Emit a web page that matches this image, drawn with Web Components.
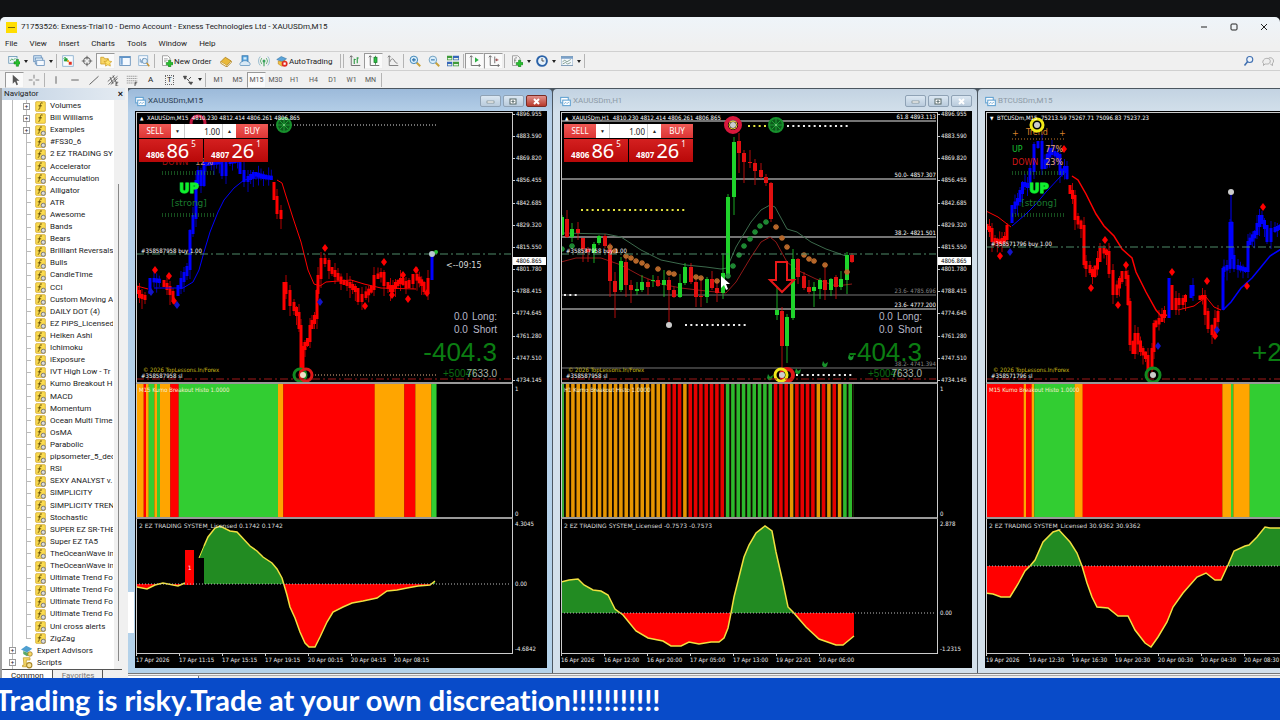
<!DOCTYPE html>
<html lang="en">
<head>
<meta charset="utf-8">
<title>71753526: Exness-Trial10 - Demo Account</title>
<style>
    html, body { margin: 0; padding: 0; background: #111214; }
    body { font-family: Roboto, "Noto Sans", sans-serif; font-size: 8px; color: #222; overflow-x: hidden; }
</style>
</head>
<body>
<terminal-app>
    <title-bar slot="top">71753526: Exness-Trial10 - Demo Account - Exness Technologies Ltd - XAUUSDm,M15</title-bar>
    <menu-bar slot="top" items="File,View,Insert,Charts,Tools,Window,Help"></menu-bar>
    <main-tools slot="top"></main-tools>
    <line-tools slot="top"></line-tools>
    <nav-tree slot="side"></nav-tree>
    <chart-window chart="gold15" active>XAUUSDm,M15</chart-window>
    <chart-window chart="gold60">XAUUSDm,H1</chart-window>
    <chart-window chart="btc15">BTCUSDm,M15</chart-window>
    <news-ticker slot="bottom">Trading is risky.Trade at your own discreation!!!!!!!!!!!</news-ticker>
</terminal-app>

<script>
const RED = '#ff0000', BLUE = '#0000ff', ORANGE = '#ffa500', LIME = '#32cd32', GREEN = '#228b22';

/* ---------- icons, 16 unit grid ---------- */
const ICONS = {
    newChart: '<rect x="1" y="2" width="11" height="9" fill="#eef6fb" stroke="#5b8fae"/><path d="M3 8l2-3 2 2 3-3" fill="none" stroke="#3a9a4a"/><path d="M8 9h3V6h3v3h3v3h-3v3h-3v-3H8z" fill="#25c02c" stroke="#0b7a12" stroke-width=".7"/>',
    profiles: '<rect x="1" y="1" width="10" height="8" fill="#cfe4f5" stroke="#5b87b5"/><rect x="3" y="4" width="10" height="8" fill="#e4f0fa" stroke="#5b87b5"/><rect x="5" y="7" width="10" height="7" fill="#f6faff" stroke="#5b87b5"/>',
    market: '<rect x="1" y="1" width="14" height="14" fill="#f8fcff" stroke="#7aa5c9"/><path d="M4 3v5M4 3l-2 2M4 3l2 2M4 5h3v3H3z" stroke="#26a03a" fill="#26a03a"/><path d="M9 9h4v4H9z" fill="#e03020"/><circle cx="8" cy="8" r="1.5" fill="#e8a020"/>',
    target: '<circle cx="8" cy="8" r="4.5" fill="none" stroke="#666" stroke-width="1.4"/><path d="M8 1v5M8 10v5M1 8h5M10 8h5" stroke="#666" stroke-width="1.3"/>',
    navigator: '<path d="M1 3h4l1 2h5v7H1z" fill="#f7d468" stroke="#c99a1c"/><path d="M10.500 5l1.700 3.200 3.500.5-2.500 2.500.6 3.600-3.300-1.700-3.200 1.700.6-3.600-2.500-2.500 3.500-.5z" fill="#ffe36a" stroke="#c48f10" stroke-width=".8"/>',
    panel: '<rect x="1" y="2" width="14" height="12" fill="#f4f9ff" stroke="#4f7fb0"/><path d="M2 3h3v10H2z" fill="#7aa7d6"/><path d="M1 2h14v2H1z" fill="#5f93c8"/>',
    tester: '<rect x="1" y="1" width="12" height="13" fill="#f4f9ff" stroke="#7da7cc"/><path d="M3 10V5M5 11V7M7 9V4" stroke="#4478a8"/><circle cx="9" cy="8" r="3.500" fill="#dcecf8" stroke="#5a86ad"/><path d="M11.500 10.500L15 15" stroke="#c79434" stroke-width="2"/>',
    order: '<path d="M2 1h7l3 3v10H2z" fill="#fff" stroke="#888"/><path d="M4 5h5M4 7h5M4 9h3" stroke="#999"/><path d="M7 10h3V7h3v3h3v3h-3v3h-3v-3H7z" fill="#25c02c" stroke="#0b7a12" stroke-width=".7"/>',
    book: '<path d="M1 9l6-6 8 5-6 6z" fill="#e9b93a" stroke="#a8770f"/><path d="M1 9v2l8 5v-2M15 8v2l-6 6" fill="#fff3c8" stroke="#a8770f"/>',
    cloud: '<rect x="4" y="1" width="8" height="8" fill="#5aa7e0" stroke="#2f6fa8"/><path d="M6 3h4v3H6z" fill="#d6ecfb"/><path d="M2 14a3 3 0 012-5c2-2 6-2 8 0a3 3 0 012 5z" fill="#d9e9f5" stroke="#5a8fbb"/>',
    signal: '<circle cx="8" cy="8" r="2" fill="#3aa35a"/><path d="M5 4a6 6 0 000 8M11 4a6 6 0 010 8" fill="none" stroke="#5fb070" stroke-width="1.200"/><path d="M3 2a9 9 0 000 12M13 2a9 9 0 010 12" fill="none" stroke="#8fb8cc" stroke-width="1.200"/><path d="M8 9v6" stroke="#3aa35a" stroke-width="1.500"/>',
    auto: '<path d="M1 6l6-4 7 3-6 4z" fill="#5ba4d8" stroke="#2f6da0" stroke-width=".7"/><path d="M3 8v4l5 3 4-3V7l-4 2z" fill="#f2c043" stroke="#b37c12" stroke-width=".7"/><circle cx="11.500" cy="11.500" r="4" fill="#e02c20"/><rect x="10" y="10" width="3" height="3" fill="#fff"/>',
    bars: '<path d="M3 1v13h12M1 3l2-2 2 2" fill="none" stroke="#666" stroke-width="1.200"/><path d="M7 5v7M7 6h2M11 3v8M11 4h2" stroke="#2f9a44" stroke-width="1.500"/>',
    candles: '<path d="M3 1v13h12M1 3l2-2 2 2" fill="none" stroke="#666" stroke-width="1.200"/><path d="M10 1v12" stroke="#1c7a2c"/><rect x="8" y="3" width="4" height="7" fill="#2cc043" stroke="#1c7a2c"/>',
    line: '<path d="M3 1v13h12M1 3l2-2 2 2M4 9c2-5 4-5 6-1 1 2 3 3 4 3" fill="none" stroke="#777" stroke-width="1.200"/>',
    zoomIn: '<path d="M10 10l5 5" stroke="#c9a23a" stroke-width="2.500"/><circle cx="6.500" cy="6.500" r="5" fill="#d9eefb" stroke="#3f86b8" stroke-width="1.300"/><path d="M4 6.500h5M6.500 4v5" stroke="#2a6fa8" stroke-width="1.400"/>',
    zoomOut: '<path d="M10 10l5 5" stroke="#c9a23a" stroke-width="2.500"/><circle cx="6.500" cy="6.500" r="5" fill="#d9eefb" stroke="#6f9fc0" stroke-width="1.300"/><path d="M4 6.500h5" stroke="#2a6fa8" stroke-width="1.400"/>',
    tile: '<rect x="0" y="1" width="7" height="6" fill="#3f9a3a"/><rect x="8" y="1" width="8" height="6" fill="#3566b8"/><rect x="0" y="9" width="7" height="6" fill="#3566b8"/><rect x="8" y="9" width="8" height="6" fill="#3f9a3a"/><path d="M1 4h5v2H1zM9 4h6v2H9zM1 12h5v2H1zM9 12h6v2H9z" fill="#e8f2e0"/>',
    scroll: '<path d="M3 1v13h12M1 3l2-2 2 2M13 12l2 2-2 2" fill="none" stroke="#666" stroke-width="1.200"/><path d="M8 3l5 3.500L8 10z" fill="#2cb043"/>',
    shift: '<path d="M3 1v13h12M1 3l2-2 2 2M13 12l2 2-2 2M9 2v9" fill="none" stroke="#666" stroke-width="1.200"/><path d="M14 6.500h-3M12 5l-2 1.500L12 8z" fill="#a05050" stroke="#a05050"/>',
    indicator: '<path d="M2 1h7l3 3v10H2z" fill="#f6f6f6" stroke="#888"/><path d="M8 4c-2-1-3 0-3 2v5M4 7h3" fill="none" stroke="#777"/><path d="M7 10h3V7h3v3h3v3h-3v3h-3v-3H7z" fill="#25c02c" stroke="#0b7a12" stroke-width=".7"/>',
    clock: '<circle cx="8" cy="8" r="6.500" fill="#e8f3fc" stroke="#2a62a8" stroke-width="2.600"/><path d="M8 4v4h3" fill="none" stroke="#444" stroke-width="1.200"/>',
    template: '<rect x="0" y="2" width="16" height="12" fill="#f3f8fd" stroke="#5f83a6"/><path d="M0 2h16v3H0z" fill="#7ba1c8"/><path d="M2 9l3-2 3 2 5-3M2 12l4-2 3 2 4-2" fill="none" stroke="#6a8a76"/>',
    cursor: '<path d="M5 1v12l3-3 2 5 2-1-2-5h4z" fill="#555"/>',
    cross: '<path d="M8 1v5M8 10v5M1 8h5M10 8h5" stroke="#777" stroke-width="1.200"/>',
    vline: '<path d="M8 3v10" stroke="#555" stroke-width="1.200"/>',
    hline: '<path d="M3 8h10" stroke="#555" stroke-width="1.200"/>',
    trend: '<path d="M2 14L14 3" stroke="#555" stroke-width="1.200"/>',
    channel: '<path d="M1 10l9-8M2 14L14 3M5 14l9-8M4 4l4 9M8 2l4 9" stroke="#555" stroke-width="1.100" fill="none"/><path d="M15 11h-3v5h3M12 13h2" fill="none" stroke="#333"/>',
    fibo: '<path d="M1 3h14M1 6h14M1 9h14M1 12h9" stroke="#888" stroke-dasharray="2 .6"/><path d="M15 11h-3v5M12 13h2" fill="none" stroke="#333"/>',
    arrows: '<path d="M2 3l4 0-2 4zM6 6l4 4M9 11h5l-2 3zM9 7l3-3" fill="#444" stroke="#444" stroke-width="1.200"/>',
    search: '<circle cx="9" cy="6" r="4" fill="#eef4fb" stroke="#3f6fb0" stroke-width="1.500"/><path d="M6 9l-4 5" stroke="#3f6fb0" stroke-width="2"/>',
    chat: '<path d="M1 10c0-7 10-7 10-2s-5 4-7 4l-2 2v-3zM9 4c6-2 8 5 5 7v3l-3-2" fill="#eee" stroke="#999"/>',
    windowIcon: '<rect x="1" y="2" width="11" height="8" fill="#fff" stroke="#5d9fd0" stroke-width="1.500"/><rect x="4" y="6" width="11" height="8" fill="#fff" stroke="#5d9fd0" stroke-width="1.500"/><path d="M6 12l2-3 2 2 3-2" fill="none" stroke="#5d9fd0"/>',
    func: '<rect x="1" y="1" width="14" height="14" rx="1" fill="#fbdc50" stroke="#c99d1d"/><path d="M11 3c-3-1-3 1-3.500 4S7 13 5 12M5 7h5" fill="none" stroke="#5f4a08" stroke-width="1.400"/>',
    funcGear: '<rect x="1" y="1" width="14" height="14" rx="1" fill="#fbdc50" stroke="#c99d1d"/><path d="M10 3c-3-1-3 1-3.500 4S6 13 4 12M4 7h5" fill="none" stroke="#5f4a08" stroke-width="1.400"/><circle cx="12" cy="12" r="3" fill="#ddd" stroke="#777" stroke-width="1.400"/>',
    expert: '<path d="M0 6l7-5 8 4-7 5z" fill="#4f9fd0"/><path d="M3 8v4l5 3 3-2V9L8 10z" fill="#5aa86a"/><circle cx="12" cy="12" r="3" fill="#f7d768" stroke="#9a7a20"/>',
    script: '<path d="M3 1h9v3H7v9H2v-2h2z" fill="#f8dc6a" stroke="#c0982a"/><circle cx="11" cy="11" r="3.500" fill="#f6e39a" stroke="#a88420" stroke-width="1.400"/>'
};
const icon = (name, size = 12) => `<svg width="${size}" height="${size}" viewBox="0 0 16 16" aria-hidden="true">${ICONS[name]}</svg>`;

/* ---------- shared drawing helpers ---------- */
const pts = list => list.map(p => p.join(',')).join(' ');
const path = (list, color, width = 1) => `<polyline points="${pts(list)}" fill="none" stroke="${color}" stroke-width="${width}"/>`;
const label = (x, y, text, color = '#fff', size = 6, extra = '') => `<text x="${x}" y="${y}" fill="${color}" font-size="${size}" ${extra}>${text}</text>`;
const hline = (y, color, dash = '', w = 1) => `<path d="M0 ${y}H2000" stroke="${color}" stroke-width="${w}" stroke-dasharray="${dash}"/>`;
const dots = (x1, x2, y, color, step = 3, size = 2) => `<path d="M${x1} ${y}H${x2}" stroke="${color}" stroke-width="${size}" stroke-dasharray="${size} ${step - size}"/>`;
const diamond = color => ([x, y]) => `<path d="M${x} ${y - 4}l3 4-3 4-3-4z" fill="${color}"/>`;
const ring = (x, y, r, color, w = 3) => `<circle cx="${x}" cy="${y}" r="${r}" fill="none" stroke="${color}" stroke-width="${w}"/>`;
const dot = (x, y, color = '#ccc', r = 3) => `<circle cx="${x}" cy="${y}" r="${r}" fill="${color}"/>`;
const wheel = (x, y) => `<circle cx="${x}" cy="${y}" r="7" fill="#0d5a1c" stroke="#17902c" stroke-width="2"/><path d="M${x - 6} ${y}h12M${x} ${y - 6}v12M${x - 4} ${y - 4}l8 8M${x + 4} ${y - 4}l-8 8" stroke="#1fa036" fill="none"/>` + dot(x, y, '#8c8', 1);
const star = color => ([x, y]) => `<path d="M${x - 3} ${y}h6M${x} ${y - 3}v6M${x - 2} ${y - 2}l4 4M${x + 2} ${y - 2}l-4 4" stroke="${color}" stroke-width="1.300"/>`;

// thin OHLC bars along a path of closes
function bars(list, color) {
    let out = '', n = 0;
    for (let i = 0; i < list.length - 1; i++) {
        const [x1, y1] = list[i], [x2, y2] = list[i + 1];
        const steps = Math.max(1, Math.round((x2 - x1) / 2.7));
        for (let s = 0; s < steps; s++, n++) {
            const x = x1 + (x2 - x1) * s / steps;
            const a = y1 + (y2 - y1) * s / steps, b = y1 + (y2 - y1) * (s + 1) / steps;
            const top = Math.min(a, b) - 2, bottom = Math.max(a, b) + 2;
            const up = (n * 7) % 9, down = (n * 5) % 11;
            out += `<path d="M${x} ${top}V${bottom}" stroke="${color}" stroke-width="3"/><path d="M${x} ${top - up}V${bottom + down}" stroke="${color}" stroke-width=".7"/>`;
        }
    }
    return out;
}

function candles(rows) {
    return rows.map(([x, open, close, high, low, up]) => {
        const color = up ? '#1fd32b' : '#e01010';
        return `<path d="M${x} ${high}V${low}" stroke="${color}" stroke-width=".8"/><rect x="${x - 2}" y="${open}" width="4" height="${Math.max(1, close - open)}" fill="${color}"/>`;
    }).join('');
}

const pips = (x, minus) => label(x, 208, '0.0', '#b8b8c8', 10, 'class="arial"') + label(x + 43, 208, 'Long:', '#b8b8c8', 10, 'class="arial end"')
    + label(x, 221, '0.0', '#b8b8c8', 10, 'class="arial"') + label(x + 43, 221, 'Short', '#b8b8c8', 10, 'class="arial end"')
    + label(x + 43, 249, minus, '#0b7d12', 26, 'class="arial end"')
    + label(x - 11, 265, '+50047', '#0b6d12', 10, 'class="arial"') + label(x + 43, 265, '7633.0', '#a8b0a8', 10, 'class="arial end"');
const trendBox = full => (full
    ? label(26, 24, '+', '#d9822b', 8, 'class="wide"') + label(40, 23, 'Trend', '#d9822b', 8, 'class="wide"') + label(73, 24, '+', '#d9822b', 8, 'class="wide"') + dots(26, 79, 27, '#c8782a', 3, 1)
        + label(26, 40, 'UP', '#18c030', 8, 'class="wide"') + label(77, 40, '77%', '#e8a878', 8, 'class="wide end"')
        + label(26, 53, 'DOWN', '#d01818', 8, 'class="wide"') + label(77, 53, '23%', '#e8a878', 8, 'class="wide end"')
    : label(26, 53, 'DOWN', '#a01010', 8, 'class="wide"') + label(77, 53, '12%', '#c88868', 8, 'class="wide end"'))
    + [60, 62, 102, 104].map(y => dots(26, 79, y, '#2d9a3c', 3, 1)).join('')
    + label(53, 81, 'UP', '#10f030', 14, 'class="heavy"') + label(53, 94, '[strong]', '#1c7c30', 9, 'class="wide mid"');
const tradeLines = (id, y) => hline(y, '#4f8a68', '8 3 2 3') + label(5, y - 1, `#${id} buy 1.00`)
    + hline(267, '#a01818', '8 3 2 3') + label(7, 260, '© 2026 TopLessons.In/Forex', '#c8b818') + label(5, 266, `#${id} sl`);

const GOLD_AXIS = ['4896.955', '4883.590', '4869.820', '4856.455', '4842.685', '4829.320', '4815.550', '4801.780', '4788.415', '4774.645', '4761.280', '4747.510', '4734.145'];

const CHARTS = {
    gold15: {
        header: 'XAUUSDm,M15&nbsp; 4810.230 4812.414 4806.261 4806.865',
        panel: true, arrow: '▲',
        axis: GOLD_AXIS,
        draw: () => ring(62, 11, 7, '#c01840')
            + bars([[1, 176], [6, 184], [12, 186]], RED) + bars([[14, 180], [18, 168], [26, 169]], BLUE) + bars([[28, 170], [34, 176], [40, 186]], RED)
            + bars([[42, 182], [48, 168], [54, 156], [57, 120], [60, 105], [62, 70], [65, 60], [68, 72], [70, 52], [86, 50], [90, 62], [94, 50], [104, 48], [108, 60], [112, 68], [120, 62], [130, 65], [138, 66]], BLUE)
            + bars([[138, 72], [141, 86], [145, 100], [148, 105]], RED)
            + bars([[148, 196], [150, 172], [154, 180], [158, 192], [163, 202], [165, 215], [167, 262], [169, 236], [174, 228], [176, 215], [181, 205], [182, 180], [185, 165], [189, 148], [193, 150], [196, 157], [202, 163], [208, 170], [214, 172], [222, 178], [226, 188], [230, 184], [238, 176], [242, 165], [248, 162], [252, 172], [257, 178], [262, 172], [267, 168], [273, 174], [277, 170], [281, 164], [288, 172], [292, 178], [294, 168]], RED)
            + bars([[296, 166], [298, 144]], BLUE)
            + path([[1, 174], [12, 177]], RED) + path([[18, 176], [47, 176], [57, 170], [63, 158], [68, 140], [74, 120], [82, 100], [88, 88], [98, 76], [108, 68], [120, 66], [136, 66]], BLUE)
            + path([[141, 68], [146, 71], [150, 84], [157, 106], [165, 130], [172, 158], [178, 172], [184, 174], [190, 170], [215, 168], [228, 172], [245, 176], [280, 177]], RED)
            + trendBox(false)
            + [[19, 158], [33, 164], [38, 189], [189, 136], [248, 150], [256, 183], [267, 163], [272, 187], [280, 158], [291, 181], [229, 194]].map(diamond(RED)).join('')
            + [[15, 180], [41, 193], [184, 190]].map(diamond('#1414c8')).join('')
            + dots(134, 300, 13, '#ddd', 3, 1) + wheel(148, 13) + dots(176, 300, 263, '#e8b088', 3, 1)
            + ring(164, 263, 6, '#128a20') + ring(170, 263, 6, '#e01818') + dot(167, 263, '#f0e0c8')
            + tradeLines('358587958', 142) + dot(300, 140, '#28c038', 2) + dot(296, 142, '#b8c8d0')
            + label(310, 156, '&lt;--09:15', '#d8d8d8', 8, 'class="wide"') + pips(318, '-404.3'),
        histo: [[ORANGE, 20], [RED, 7], [ORANGE, 8], [LIME, 17], [ORANGE, 8], [LIME, 9], [ORANGE, 31], [RED, 25], [LIME, 298], [ORANGE, 16], [RED, 274], [ORANGE, 89], [RED, 33], [ORANGE, 48], [LIME, 15]],
        histoName: 'M15 Kumo Breakout Histo 1.0000',
        oscName: '2 EZ TRADING SYSTEM_Licensed 0.1742 0.1742',
        zero: 65, oscAxis: ['4.3045', '0.00', '-4.6842'],
        osc: [[[1, 68], [11, 70], [19, 66], [27, 64], [42, 67], [49, 64]], [[68, 27], [72, 18], [79, 9], [84, 7], [94, 12], [101, 13], [114, 27], [121, 32], [127, 38], [136, 44], [141, 50], [146, 59], [151, 76], [154, 88], [159, 99], [164, 113], [169, 124], [173, 128], [179, 128], [184, 118], [191, 103], [197, 93], [207, 88], [216, 84], [227, 82], [241, 79], [251, 72], [261, 71], [271, 69], [282, 67], [294, 66], [299, 62]]],
        oscExtra: '<rect x="49" y="31" width="9" height="35" fill="red"/><text x="52" y="51" fill="#fff" font-size="6">1</text><path d="M63 39L68 27v12z" fill="#228b22"/><path d="M63 39L68 27" stroke="#e8e83a"/>',
        times: ['17 Apr 2026', '17 Apr 11:15', '17 Apr 15:15', '17 Apr 19:15', '20 Apr 00:15', '20 Apr 04:15', '20 Apr 08:15']
    },
    gold60: {
        header: 'XAUUSDm,H1&nbsp; 4810.230 4812.414 4806.261 4806.865',
        panel: true, arrow: '▲',
        axis: GOLD_AXIS,
        draw: () => [[9, '61.8 4893.113'], [67, '50.0- 4857.307'], [125, '38.2- 4821.501'], [197, '23.6- 4777.200']].map(([y, t]) => hline(y, '#e8e8e8') + label(375, y - 2, t, '#fff', 6, 'class="end"')).join('')
            + [[183, '23.6- 4785.696'], [256, '38.2- 4741.394']].map(([y, t]) => hline(y, '#777') + label(375, y - 2, t, '#888', 6, 'class="end"')).join('')
            + dots(20, 126, 98, '#e8e840', 5.33) + dots(124, 186, 213, '#eee', 5.33) + dots(3, 18, 183, '#eee', 5.33)
            + dots(187, 210, 14, '#e8e840', 5.33) + dots(226, 287, 14, '#eee', 5.33) + dots(235, 292, 263, '#eee', 5.33)
            + path([[0, 121], [45, 122], [60, 125], [80, 138], [100, 148], [125, 153], [145, 155], [160, 157], [166, 156], [175, 135], [190, 110], [200, 98], [209, 93], [214, 95], [226, 117], [236, 120], [250, 130], [265, 137], [285, 144]], '#3c6a4c')
            + path([[0, 150], [15, 146], [40, 146], [60, 153], [80, 164], [100, 172], [120, 176], [145, 179], [165, 181], [175, 170], [190, 145], [200, 130], [209, 125], [215, 130], [226, 150], [236, 158], [255, 167], [275, 174], [291, 172]], '#901818')
            + candles([
                [1, 105, 123, 103, 125, 1], [6, 107, 125, 98, 126], [11, 117, 125, 111, 130, 1], [17, 117, 121, 110, 128], [22, 126, 137, 126, 150], [27, 137, 140, 135, 150],
                [33, 132, 141, 130, 151, 1], [38, 124, 131, 123, 133, 1], [44, 124, 134, 122, 136], [49, 135, 169, 131, 185], [54, 169, 180, 160, 206], [60, 149, 178, 145, 180, 1],
                [65, 150, 173, 146, 185], [70, 173, 178, 168, 191], [76, 177, 179, 170, 183, 1], [81, 170, 178, 163, 180, 1], [87, 170, 175, 167, 183], [92, 168, 169, 163, 175, 1],
                [97, 168, 174, 164, 175], [103, 168, 173, 158, 185, 1], [108, 168, 178, 165, 211], [113, 178, 185, 175, 186], [119, 171, 185, 162, 186, 1], [124, 155, 171, 151, 173, 1],
                [130, 155, 170, 151, 172], [135, 170, 185, 166, 195], [140, 184, 185, 168, 195], [146, 167, 185, 165, 191, 1], [151, 167, 176, 159, 178], [156, 176, 181, 170, 190],
                [162, 161, 181, 141, 187, 1], [167, 85, 164, 82, 166, 1], [173, 30, 85, 25, 103, 1], [178, 29, 41, 21, 61], [183, 41, 50, 38, 71], [189, 50, 51, 38, 56], [194, 51, 59, 47, 73],
                [200, 58, 65, 51, 67], [205, 65, 71, 62, 74], [210, 71, 107, 70, 110], [216, 198, 203, 175, 208, 1], [221, 199, 234, 195, 256], [226, 205, 234, 202, 251, 1], [232, 147, 206, 137, 208, 1],
                [237, 147, 165, 146, 172], [243, 164, 176, 160, 178], [248, 175, 180, 168, 182], [253, 175, 179, 170, 195, 1], [259, 168, 177, 166, 187, 1], [264, 168, 178, 156, 188], [270, 167, 178, 166, 184, 1],
                [275, 165, 175, 163, 187], [280, 167, 175, 159, 178, 1], [286, 143, 168, 140, 182, 1], [291, 143, 150, 141, 151]])
            + [[49, 135], [54, 139], [65, 144], [70, 146], [75, 149], [81, 151], [86, 154], [97, 157], [108, 161], [113, 162], [135, 165], [140, 166], [156, 169], [215, 115], [221, 126], [226, 135], [243, 143], [248, 147], [253, 149], [264, 153], [286, 160]].map(star('#b8682a')).join('')
            + [[1, 137], [11, 134], [167, 164], [172, 154], [178, 143], [183, 134], [189, 127], [194, 120], [199, 114], [205, 110]].map(star('#1f8a34')).join('')
            + '<path d="M215 150h11v18h7l-12 12-12-12h6z" fill="none" stroke="#e81818" stroke-width="2"/>'
            + ring(172, 13, 7, '#d8183c', 4) + ring(172, 13, 4, '#e8c83a', 1) + dot(172, 13) + wheel(215, 13)
            + ring(226, 263, 6, '#e01818', 4) + ring(220, 263, 6, '#f0e818') + dot(221, 263)
            + [[290, 245], [264, 252], [237, 259], [209, 265]].map(([x, y]) => `<path d="M${x - 2} ${y - 3}l2 3 3-2-1 4q-3 3-5-1z" fill="#16902a"/>`).join('')
            + dot(108, 213) + tradeLines('358587958', 142) + pips(318, '-404.3')
            + '<path d="M160 164v12l3-3 2 5 2-1-2-5h4z" fill="#fff"/>',
        histo: [['#3cb93c', 11], [ORANGE, 304], [RED, 48], [ORANGE, 16], [RED, 112], [LIME, 144], [RED, 48], [ORANGE, 16], [RED, 64], [ORANGE, 16], [RED, 16], [ORANGE, 16], [RED, 16], [ORANGE, 16], [LIME, 32]],
        striped: true,
        histoName: 'H1 Kumo Breakout Histo 1.0000',
        oscName: '2 EZ TRADING SYSTEM_Licensed -0.7573 -0.7573',
        zero: 94, oscAxis: ['2.878', '0.00', '-1.2315'],
        osc: [[[0, 63], [8, 61], [17, 60], [23, 66], [32, 71], [40, 72], [47, 76], [54, 90], [62, 96], [75, 112], [87, 119], [102, 122], [110, 127], [120, 127], [128, 123], [138, 125], [150, 123], [158, 123], [163, 119], [167, 109], [170, 94], [173, 78], [178, 58], [183, 38], [188, 26], [195, 14], [204, 7], [211, 12], [215, 33], [222, 64], [227, 88], [232, 93], [245, 108], [258, 120], [275, 126], [282, 126], [293, 117]]],
        times: ['16 Apr 2026', '16 Apr 12:00', '16 Apr 20:00', '17 Apr 05:00', '17 Apr 13:00', '19 Apr 22:01', '20 Apr 06:00']
    },
    btc15: {
        header: 'BTCUSDm,M15&nbsp; 75213.59 75267.71 75096.83 75237.23',
        arrow: '▼',
        axis: [],
        draw: () => bars([[1, 114], [6, 118], [9, 128], [16, 130], [21, 126], [25, 115]], RED)
            + bars([[26, 109], [29, 95], [34, 88], [39, 72], [44, 74], [48, 58], [52, 34], [56, 31], [59, 55], [66, 38], [69, 41], [74, 44], [76, 61], [81, 56], [83, 65]], BLUE)
            + bars([[84, 75], [89, 85], [92, 106], [98, 115], [100, 151], [104, 155], [109, 163], [114, 148], [118, 138], [123, 141], [127, 160], [131, 181], [136, 168], [140, 161], [142, 165], [144, 191], [147, 231], [149, 240], [152, 223], [157, 238], [162, 245], [166, 256], [168, 238], [170, 213], [176, 208], [181, 200]], RED)
            + bars([[183, 204], [185, 168]], BLUE) + bars([[186, 175], [190, 196], [193, 188], [197, 191], [202, 185]], RED) + bars([[205, 184], [207, 175], [211, 182]], BLUE)
            + bars([[214, 186], [219, 185], [222, 201], [226, 215], [229, 221], [232, 208], [235, 201]], RED)
            + bars([[237, 196], [238, 158], [244, 155], [246, 112], [248, 145], [252, 155], [262, 158], [264, 131], [271, 121], [276, 105], [281, 115], [285, 128], [289, 118], [296, 115], [310, 105]], BLUE)
            + path([[245, 82], [245, 120]], BLUE)
            + path([[0, 99], [12, 105], [25, 115]], RED) + path([[26, 114], [40, 102], [50, 92], [60, 80], [75, 64], [80, 60]], BLUE)
            + path([[86, 64], [92, 68], [100, 82], [110, 102], [118, 114], [128, 124], [136, 137], [146, 146], [150, 160], [160, 180], [170, 198], [176, 205], [181, 203]], RED, 1.5)
            + path([[192, 198], [208, 194], [220, 185], [228, 195], [235, 198]], RED) + path([[237, 198], [245, 190], [255, 176], [266, 166], [275, 155], [284, 144], [300, 134]], BLUE, 1.5)
            + [[14, 144], [78, 37], [105, 176], [119, 128], [132, 193], [140, 153], [186, 160], [221, 169], [229, 224], [261, 174], [277, 95]].map(diamond(RED)).join('')
            + [[24, 140], [172, 234], [231, 218]].map(diamond('#1414c8')).join('')
            + trendBox(true) + dot(245, 80, '#ccc') + ring(51, 13, 6, '#f0e818') + dot(51, 13)
            + tradeLines('358571796', 135) + ring(167, 263, 7, '#128a20') + dot(167, 263)
            + label(266, 249, '+2', '#0b7d12', 26, 'class="arial"'),
        histo: [[RED, 110], [ORANGE, 7], [RED, 17], [ORANGE, 8], [LIME, 121], [ORANGE, 24], [RED, 419], [ORANGE, 26], [LIME, 7], [ORANGE, 49], [LIME, 200]],
        histoName: 'M15 Kumo Breakout Histo 1.0000',
        oscName: '2 EZ TRADING SYSTEM_Licensed 30.9362 30.9362',
        zero: 47, oscAxis: [],
        osc: [[[0, 74], [7, 75], [15, 78], [24, 78], [32, 65], [39, 52], [44, 47], [49, 41], [57, 23], [67, 13], [73, 11], [84, 23], [91, 34], [96, 47], [101, 64], [106, 78], [111, 88], [122, 89], [132, 97], [142, 97], [149, 111], [159, 124], [165, 128], [172, 118], [181, 103], [187, 88], [197, 74], [211, 58], [220, 54], [229, 61], [235, 61], [242, 46], [248, 32], [259, 27], [263, 26], [271, 18], [279, 8], [284, 9], [310, 9]]],
        times: ['19 Apr 2026', '19 Apr 12:30', '19 Apr 16:30', '19 Apr 20:30', '20 Apr 00:30', '20 Apr 04:30', '20 Apr 08:30']
    }
};

/* ---------- elements ---------- */
class TerminalApp extends HTMLElement {
    constructor() {
        super();
        this.attachShadow({ mode: 'open' }).innerHTML = `
            <style>
                :host { display: flex; flex-direction: column; min-height: 100vh; padding-top: 17px; box-sizing: border-box; overflow: hidden; }
                header { background: linear-gradient(#eef4f9, #f0f0f0 30px); border-radius: 5px 5px 0 0; }
                main { flex: 1; display: flex; gap: 1px; background: #f0f0f0; }
                .desk { flex: 1; min-width: 0; display: flex; flex-direction: column; overflow: hidden; }
                .windows { display: flex; gap: 1px; padding-top: 1px; background: #4b5660; border-bottom: 1px solid #777; }
                .tabs { flex: 1; display: flex; margin-top: 1px; border-top: 1px solid #aaa; background: #ececec; }
                .tabs i { width: 70px; background: #fff; border-right: 1px solid #777; }
            </style>
            <header><slot name="top"></slot></header>
            <main>
                <slot name="side"></slot>
                <div class="desk"><div class="windows"><slot></slot></div><div class="tabs"><i></i></div></div>
            </main>
            <slot name="bottom"></slot>`;
    }
}

class TitleBar extends HTMLElement {
    constructor() {
        super();
        this.attachShadow({ mode: 'open' }).innerHTML = `
            <style>
                :host { display: flex; align-items: center; height: 20px; padding: 0 10px 0 6px; gap: 4px; }
                .logo { width: 11px; height: 11px; background: #ffde02; display: grid; place-items: center; }
                .logo i { width: 7px; height: 1px; background: #7a6a10; }
                h1 { flex: 1; margin: 0; font-size: 8px; line-height: 12px; font-weight: 400; white-space: nowrap; }
                button { width: 12px; height: 12px; padding: 0; margin-left: 14px; border: 0; background: none; }
                svg { display: block; fill: none; stroke: #222; }
            </style>
            <span class="logo"><i></i></span><h1><slot></slot></h1>
            <button aria-label="Minimize"><svg width="12" height="12"><path d="M3 6h6"/></svg></button>
            <button aria-label="Maximize"><svg width="12" height="12"><rect x="3" y="3" width="6" height="6" rx="1"/></svg></button>
            <button aria-label="Close"><svg width="12" height="12"><path d="M3 3l6 6M9 3L3 9"/></svg></button>`;
    }
}

class MenuBar extends HTMLElement {
    connectedCallback() {
        this.attachShadow({ mode: 'open' }).innerHTML = `
            <style>
                :host { display: flex; gap: 12px; height: 14px; padding: 0 5px; }
                button { border: 0; padding: 0; background: none; font: inherit; font-size: 8px; line-height: 14px; color: #222; }
            </style>` + this.getAttribute('items').split(',').map(t => `<button>${t}</button>`).join('');
    }
}

const TOOL_CSS = `
    :host { display: flex; align-items: center; box-sizing: border-box; border-top: 1px solid #d0d0d0; padding: 0 3px 0 5px; }
    button { display: flex; align-items: center; justify-content: center; flex: none; width: 19px; height: 16px; padding: 0; border: 1px solid transparent; box-sizing: border-box; background: none; font: inherit; font-size: 8px; color: #222; white-space: nowrap; }
    button.on { background: #fafafa; border-color: #999 #eee #eee #999; }
    button.drop { width: 25px; gap: 4px; }
    button.drop::after { content: ""; border: 2px solid transparent; border-top: 3px solid #222; border-bottom: 0; }
    button.wide { width: 60px; gap: 1px; justify-content: flex-start; padding-left: 4px; }
    button.auto { width: 66px; gap: 1px; justify-content: flex-start; padding-left: 2px; }
    button.tf { font-size: 7px; color: #555; }
    i { flex: none; width: 1px; height: 14px; margin: 0 1px; background: #b4b4b4; }
    i.far { margin-right: 3px; }
    .gap { flex: 1; }
`;
const tool = (name, cls = '') => `<button class="${cls}" aria-label="${name}">${icon(name)}</button>`;

class MainTools extends HTMLElement {
    constructor() {
        super();
        this.attachShadow({ mode: 'open' }).innerHTML = `<style>${TOOL_CSS}:host { height: 19px; }</style>`
            + tool('newChart', 'drop') + tool('profiles', 'drop') + '<i></i>' + tool('market') + tool('target') + tool('navigator', 'on') + tool('panel') + tool('tester')
            + `<i></i><button class="wide">${icon('order')}<span>New Order</span></button>` + tool('book') + tool('cloud') + tool('signal')
            + `<button class="auto">${icon('auto')}<span>AutoTrading</span></button><i></i><i></i>` + tool('bars') + tool('candles', 'on') + tool('line')
            + '<i></i>' + tool('zoomIn') + tool('zoomOut') + tool('tile') + '<i></i>' + tool('scroll', 'on') + tool('shift', 'on') + '<i class="far"></i>'
            + tool('indicator', 'drop') + tool('clock', 'drop') + tool('template', 'drop') + '<i></i><span class="gap"></span>' + tool('search') + tool('chat');
    }
}

class LineTools extends HTMLElement {
    constructor() {
        super();
        this.attachShadow({ mode: 'open' }).innerHTML = `<style>${TOOL_CSS}:host { height: 18px; } .boxed { border: 1px dotted #666; line-height: 8px; padding: 0 1px; }</style>`
            + tool('cursor', 'on') + tool('cross') + '<i></i>' + ['vline', 'hline', 'trend', 'channel', 'fibo'].map(n => tool(n)).join('')
            + '<button>A</button><button><span class="boxed">T</span></button>' + tool('arrows', 'drop') + '<i class="far"></i>'
            + ['M1', 'M5', 'M15', 'M30', 'H1', 'H4', 'D1', 'W1', 'MN'].map(t => `<button class="tf${t === 'M15' ? ' on' : ''}">${t}</button>`).join('') + '<i></i>';
    }
}

const INDICATORS = ['+Volumes', '+Bill Williams', '*Examples', '#FS30_6', '2 EZ TRADING SYS', 'Accelerator', 'Accumulation', 'Alligator', 'ATR', 'Awesome', 'Bands', 'Bears', 'Brilliant Reversals', 'Bulls', 'CandleTime', 'CCI', 'Custom Moving A', 'DAILY DOT (4)', 'EZ PIPS_Licensed', 'Heiken Ashi', 'Ichimoku', 'iExposure', 'IVT High Low - Tr', 'Kumo Breakout H', 'MACD', 'Momentum', 'Ocean Multi Time', 'OsMA', 'Parabolic', 'pipsometer_5_dec', 'RSI', 'SEXY ANALYST v.', 'SIMPLICITY', 'SIMPLICITY TREN', 'Stochastic', 'SUPER EZ SR-THE', 'Super EZ TA5', 'TheOceanWave in', 'TheOceanWave in', 'Ultimate Trend Fo', 'Ultimate Trend Fo', 'Ultimate Trend Fo', 'Ultimate Trend Fo', 'Uni cross alerts', 'ZigZag'];

class NavTree extends HTMLElement {
    constructor() {
        super();
        const rows = INDICATORS.map(name => {
            const folder = /^[+*]/.test(name);
            return `<li>${folder ? '<b>+</b>' : '<s></s>'}${icon(name[0] === '+' ? 'func' : 'funcGear', 11)}<span>${folder ? name.slice(1) : name}</span></li>`;
        }).join('');
        this.attachShadow({ mode: 'open' }).innerHTML = `
            <style>
                :host { flex: none; width: 127px; box-sizing: border-box; display: flex; flex-direction: column; border-left: 2px solid #a0a0a0; background: #f0f0f0; }
                header { display: flex; justify-content: space-between; align-items: center; height: 12px; padding: 0 2px; margin-right: 2px; background: linear-gradient(90deg, #c3d3e4, #e4ebf2); line-height: 12px; }
                header button { border: 0; padding: 0; background: none; font: bold 9px/10px "Liberation Sans", sans-serif; color: #111; }
                .body { flex: 1; display: grid; grid-template-columns: 1fr 9px; margin-right: 4px; background: #fff; }
                ul { margin: 0; padding: 0 1px 0 0; list-style: none; display: grid; grid-auto-rows: 1fr; min-width: 0;
                     background: linear-gradient(#bbb, #bbb) 10px 0 / 1px 100% no-repeat, linear-gradient(#bbb, #bbb) 24px 0 / 1px 539px no-repeat; }
                li { display: flex; align-items: center; gap: 4px; padding-left: 21px; overflow: hidden; height: 12px; line-height: 12px; white-space: nowrap; }
                li.root { padding-left: 7px; }
                b { flex: none; width: 5px; height: 5px; border: 1px solid #999; background: #fff; font-size: 6px; line-height: 4px; text-align: center; font-weight: 400; margin-right: 1px; }
                s { flex: none; width: 5px; height: 1px; margin-left: 3px; background: #bbb; }
                svg { flex: none; }
                .bar { background: #f0f0f0; display: flex; justify-content: center; padding: 84px 0 8px; }
                .bar i { width: 1px; background: #888; }
                nav { display: flex; height: 8px; overflow: hidden; border-top: 1px solid #555; margin-right: 5px; }
                nav button { border: 0; border-right: 1px solid #555; padding: 0 8px 0 9px; background: none; font: inherit; height: 11px; line-height: 11px; color: #777; }
                nav button:first-child { background: #fff; color: #222; }
            </style>
            <header><span>Navigator</span><button aria-label="Close navigator">×</button></header>
            <div class="body">
                <ul>${rows}
                    <li class="root"><b>+</b>${icon('expert')}<span>Expert Advisors</span></li>
                    <li class="root"><b>+</b>${icon('script')}<span>Scripts</span></li>
                </ul>
                <div class="bar"><i></i></div>
            </div>
            <nav><button>Common</button><button>Favorites</button></nav>`;
    }
}

class TradePanel extends HTMLElement {
    constructor() {
        super();
        this.attachShadow({ mode: 'open' }).innerHTML = `
            <style>
                :host { display: grid; grid-template-columns: 64px 64px; gap: 1px; width: 129px; color: #fff; font-family: "Noto Sans", sans-serif; }
                .top { grid-column: 1 / 3; display: grid; grid-template-columns: 32px 13px 1fr 13px 32px; height: 14px; }
                button { border: 0; padding: 0; background: linear-gradient(#f05a55, #dd3535); color: #fff; font: inherit; font-size: 8px; line-height: 14px; }
                button.step { background: #fff; color: #222; font-size: 5px; }
                input { width: 100%; min-width: 0; box-sizing: border-box; border: 0; border-left: 1px solid #ccc; border-right: 1px solid #ccc; padding: 0 2px; text-align: right; font: inherit; font-size: 8px; background: #fff; color: #222; }
                .quote { display: flex; justify-content: center; align-items: flex-end; gap: 2px; height: 23px; line-height: 23px; background: linear-gradient(#d42020, #b80808); }
                .quote small { font-size: 8px; font-weight: 700; line-height: 15px; }
                .quote strong { font-size: 20px; font-weight: 400; }
                .quote sup { font-size: 8px; line-height: 10px; align-self: flex-start; }
            </style>
            <div class="top">
                <button>SELL</button><button class="step" aria-label="Less">▼</button><input aria-label="Volume" value="1.00"><button class="step" aria-label="More">▲</button><button>BUY</button>
            </div>
            <button class="quote"><small>4806</small><strong>86</strong><sup>5</sup></button>
            <button class="quote"><small>4807</small><strong>26</strong><sup>1</sup></button>`;
    }
}

class ChartWindow extends HTMLElement {
    connectedCallback() {
        const c = CHARTS[this.getAttribute('chart')];
        this.attachShadow({ mode: 'open' }).innerHTML = `
            <style>
                :host { --frame: #d3e0eb; --text: #8d9aa6; flex: none; width: max(424px, 33vw); box-sizing: border-box; padding: 0 5px 5px 7px; background: linear-gradient(#c3d3e2, var(--frame) 24px); border-radius: 4px 4px 0 0; }
                :host([active]) { --text: #2b3d52; background: linear-gradient(#fff, #fff) 0 503px / 6px 41px no-repeat, linear-gradient(#9cbada, #b5cfe8 24px, #b4d2ea); }
                header { display: flex; align-items: center; gap: 2px; height: 22px; padding-top: 2px; box-sizing: border-box; color: var(--text); }
                h2 { flex: 1; margin: 0; font-size: 8px; line-height: 12px; font-weight: 400; }
                header button { width: 21px; height: 12px; border: 1px solid #8fa2b5; border-radius: 2px; padding: 0; background: linear-gradient(#dbe7f2, #b9cbdc); display: grid; place-items: center; }
                header button svg { fill: #fff; stroke: #566; }
                :host([active]) button.close { background: linear-gradient(#e0908a, #b83a2c); border-color: #7a2c24; }
                .chart { display: grid; grid-template-columns: 1fr 34px; grid-template-rows: auto auto auto 14px; padding: 1px 0 0 1px; background: #000; color: #eee; font-family: "DejaVu Sans Condensed", "DejaVu Sans", sans-serif; font-size: 6px; line-height: 8px; }
                .pane { position: relative; overflow: hidden; border-left: 1px solid #ccc; border-right: 1px solid #ccc; border-bottom: 2px solid #999; box-sizing: border-box; }
                .pane:first-child { border-top: 1px solid #ccc; }
                .pane.last { border-bottom: 1px solid #ccc; }
                .pane svg { display: block; width: 100%; margin-left: -1px; }
                .pane:first-child svg { margin-top: -1px; }
                .axis { display: flex; flex-direction: column; justify-content: space-between; padding: 1px 0 1px 2px; position: relative; }
                .axis.price { margin: -2px 0 0; padding-top: 0; padding-bottom: 0; }
                .axis.price span::before { content: ""; position: absolute; left: 0; width: 2px; height: 1px; margin-top: 4px; background: #ccc; }
                .axis.price span { padding-left: 1px; }
                .mark { position: absolute; top: 147px; left: 0; right: 1px; padding-left: 3px; background: #fff; color: #000; }
                .zero { position: absolute; left: 2px; }
                .times { display: grid; grid-template-columns: repeat(7, 43px); grid-column: 1 / 3; overflow: hidden; line-height: 12px; white-space: nowrap; }
                .times span { background: linear-gradient(#ccc, #ccc) 0 0 / 1px 2px no-repeat; }
                trade-panel { position: absolute; left: 2px; top: 11px; }
                text { white-space: pre; }
                .arial { font-family: "Liberation Sans", sans-serif; }
                .wide { font-family: "DejaVu Sans", sans-serif; }
                .end { text-anchor: end; }
                .mid { text-anchor: middle; }
                .heavy { text-anchor: middle; font-weight: 700; stroke: #10f030; stroke-width: 1; }
            </style>
            <header>${icon('windowIcon', 11)}<h2><slot></slot></h2>
                <button aria-label="Minimize"><svg width="9" height="7"><rect x="1" y="3" width="7" height="2" stroke-width=".5"/></svg></button>
                <button aria-label="Maximize"><svg width="9" height="7"><rect x="1" y="1" width="6" height="5"/><path d="M3 3h2v1H3z"/></svg></button>
                <button class="close" aria-label="Close"><svg width="9" height="7"><path d="M2 1l5 5M7 1L2 6" stroke="#fff" stroke-width="2"/></svg></button>
            </header>
            <div class="chart">
                <div class="pane"><svg height="270">${c.draw()}${label(4, 8, c.arrow, '#fff', 5)}${label(11, 8, c.header)}</svg>${c.panel ? '<trade-panel></trade-panel>' : ''}</div>
                <div class="axis price">${c.axis.map(v => `<span>${v}</span>`).join('')}${c.panel ? '<div class="mark">4806.865</div>' : ''}</div>
                <div class="pane"><svg height="133">${this.histogram(c)}${label(3, 8, c.histoName, '#f4f0d0')}</svg></div>
                <div class="axis">${c.panel ? '<span>1</span><span>0</span>' : ''}</div>
                <div class="pane last"><svg height="134">${this.oscillator(c)}${label(3, 9, c.oscName, '#ddd', 6, 'class="wide"')}</svg></div>
                <div class="axis">${c.oscAxis.length ? `<span>${c.oscAxis[0]}</span><span class="zero" style="top:${c.zero - 4}px">${c.oscAxis[1]}</span><span>${c.oscAxis[2]}</span>` : ''}</div>
                <div class="times">${c.times.map(t => `<span>${t}</span>`).join('')}</div>
            </div>`;
    }

    // widths are in thirds of a pixel
    histogram(c) {
        let x = 1, out = '';
        for (const [color, w] of c.histo) {
            out += `<rect x="${x}" width="${w / 3 + .2}" height="133" fill="${color}"${c.striped ? ' opacity=".9"' : ''}/>`;
            x += w / 3;
        }
        if (c.striped) {
            for (let s = 3; s < x; s += 16 / 3) out += `<rect x="${s}" width="1.800" height="133" fill="#120800"/>`;
        }
        return out;
    }

    oscillator(c) {
        const id = this.getAttribute('chart');
        const areas = c.osc.map(list => {
            const shape = pts([[list[0][0], c.zero], ...list, [list[list.length - 1][0], c.zero]]);
            return `<polygon points="${shape}" fill="${GREEN}" clip-path="url(#${id}-up)"/><polygon points="${shape}" fill="${RED}" clip-path="url(#${id}-down)"/>`
                + path(list, '#f0e040', 1.5);
        }).join('');
        return `<clipPath id="${id}-up"><rect width="2000" height="${c.zero}"/></clipPath><clipPath id="${id}-down"><rect y="${c.zero}" width="2000" height="134"/></clipPath>`
            + areas + (c.oscExtra || '') + dots(0, 2000, c.zero, '#bbb', 3, 1);
    }
}

class NewsTicker extends HTMLElement {
    constructor() {
        super();
        this.attachShadow({ mode: 'open' }).innerHTML = `
            <style>
                :host { display: block; height: 42px; background: #084bc9; color: #fff; overflow: hidden; white-space: nowrap; }
                p { margin: 0 0 0 -5px; font: 700 29px/44px Lato, Inter, sans-serif; font-variant-ligatures: none; }
            </style>
            <p><slot></slot></p>`;
    }
}

customElements.define('terminal-app', TerminalApp);
customElements.define('title-bar', TitleBar);
customElements.define('menu-bar', MenuBar);
customElements.define('main-tools', MainTools);
customElements.define('line-tools', LineTools);
customElements.define('nav-tree', NavTree);
customElements.define('trade-panel', TradePanel);
customElements.define('chart-window', ChartWindow);
customElements.define('news-ticker', NewsTicker);
</script>
</body>
</html>
